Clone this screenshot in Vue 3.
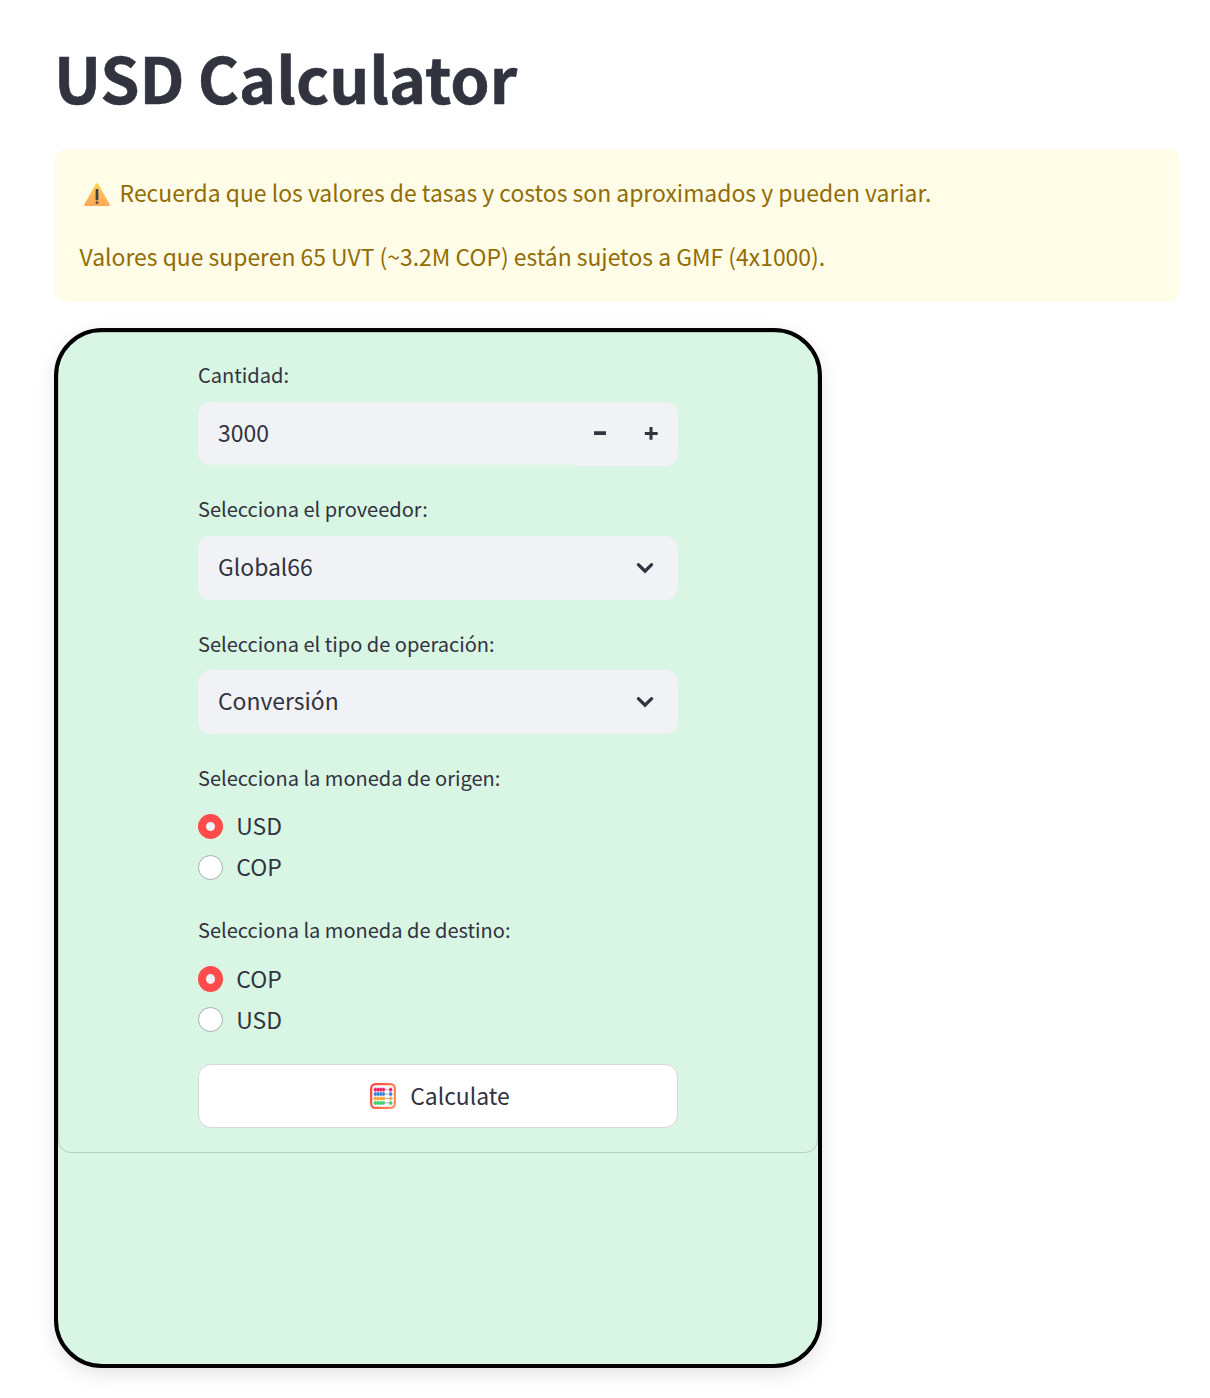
<script setup>
import { ref } from 'vue'

const amount = ref(3000)
const selects = [
  { label: 'Selecciona el proveedor:', value: 'Global66', name: 'provider' },
  { label: 'Selecciona el tipo de operación:', value: 'Conversión', name: 'operation' },
]
const radios = ref([
  { name: 'origen', label: 'Selecciona la moneda de origen:', options: ['USD', 'COP'], value: 'USD' },
  { name: 'destino', label: 'Selecciona la moneda de destino:', options: ['COP', 'USD'], value: 'COP' },
])
const beadRows = [
  { y: 6.9, color: '#ee2a6b' },
  { y: 11.5, color: '#3d86dc' },
  { y: 16.1, color: '#f7ab35' },
  { y: 20.7, color: '#3fcf74' },
]
const beads = [5.6, 8.4, 11.2, 14, 21.4]
</script>

<template>
  <main class="page">
    <h1 class="title">USD Calculator</h1>

    <section class="alert">
      <p class="alert-line">
        <svg class="warn" width="26" height="24" viewBox="0 0 26 24" aria-hidden="true">
          <defs>
            <linearGradient id="warnFill" x1="0" y1="0" x2="0" y2="1">
              <stop offset="0" stop-color="#ffd152" />
              <stop offset="1" stop-color="#ffa758" />
            </linearGradient>
          </defs>
          <path d="M11.9 .8Q13 -.5 14.1 .8L25.7 21.6Q26.2 23 24.8 23H1.2Q-.2 23 .3 21.6Z" fill="url(#warnFill)" />
          <rect x="11.6" y="6" width="2.8" height="11.2" rx=".8" fill="#45424f" />
          <rect x="11.6" y="18.4" width="2.8" height="2.4" rx=".8" fill="#45424f" />
        </svg>
        <span>Recuerda que los valores de tasas y costos son aproximados y pueden variar.</span>
      </p>
      <p class="alert-line">Valores que superen 65 UVT (~3.2M COP) están sujetos a GMF (4x1000).</p>
    </section>

    <section class="card">
      <form class="form" @submit.prevent>
        <div class="group">
          <div class="label">Cantidad:</div>
          <div class="field number">
            <span class="value">{{ amount }}</span>
            <button type="button" class="step" @click="amount--">
              <svg width="14" height="14" viewBox="0 0 14 14"><path d="M1 5.3H13V9H1Z" fill="#31333f" /></svg>
            </button>
            <button type="button" class="step plus" @click="amount++">
              <svg width="14" height="14" viewBox="0 0 14 14"><path d="M5.5 1H8.5V6H13.7V9H8.5V13.8H5.5V9H.8V6H5.5Z" fill="#31333f" /></svg>
            </button>
          </div>
        </div>

        <div v-for="s in selects" :key="s.label" class="group" :class="s.name">
          <div class="label">{{ s.label }}</div>
          <div class="field">
            <span class="value">{{ s.value }}</span>
            <svg class="chevron" width="18" height="12" viewBox="0 0 18 12">
              <path d="M2.4 2.6L9 9.2L15.6 2.6" fill="none" stroke="#31333f" stroke-width="3.2" stroke-linecap="round" stroke-linejoin="miter" />
            </svg>
          </div>
        </div>

        <div v-for="r in radios" :key="r.name" class="radio-group" :class="r.name">
          <div class="label">{{ r.label }}</div>
          <div class="options">
            <div v-for="o in r.options" :key="o" class="option" @click="r.value = o">
              <span class="dot" :class="{ on: r.value === o }"></span>
              <span class="option-text">{{ o }}</span>
            </div>
          </div>
        </div>

        <button type="submit" class="submit">
          <svg width="26" height="26" viewBox="0 0 27 27" aria-hidden="true">
            <defs>
              <linearGradient id="frame" x1="0" y1=".3" x2="1" y2=".7">
                <stop offset="0" stop-color="#f8483f" />
                <stop offset="1" stop-color="#ff8d58" />
              </linearGradient>
            </defs>
            <rect x="1.2" y="1.2" width="24.6" height="24.6" rx="4.4" fill="#fff" stroke="url(#frame)" stroke-width="2.3" />
            <g v-for="row in beadRows" :key="row.y">
              <path :d="`M3 ${row.y}H24`" stroke="#9b8ca8" stroke-width=".8" />
              <ellipse v-for="x in beads" :key="x" :cx="x" :cy="row.y" rx="1.6" ry="2.1" :fill="row.color" />
            </g>
          </svg>
          <span>Calculate</span>
        </button>
      </form>
    </section>
  </main>
</template>

<style>
body {
  margin: 0;
  background: #fff;
}
</style>

<style scoped>
.page {
  box-sizing: border-box;
  width: 1210px;
  height: 1398px;
  padding: 35px 30px 0 54px;
  overflow: hidden;
  color: #31333f;
  font-family: "Noto Sans CJK SC", "Noto Sans", sans-serif;
  font-size: 22.92px;
}
.title {
  margin: 0 0 30px;
  height: 84px;
  font-size: 63px;
  line-height: 84px;
  font-weight: 700;
  letter-spacing: -0.05px;
  word-spacing: -1px;
  -webkit-text-stroke: 0.6px #31333f;
}
.alert {
  box-sizing: border-box;
  height: 153px;
  padding: 24px 25.6px;
  border-radius: 12.8px;
  background: #fffce7;
  color: #926c05;
}
.alert-line {
  display: flex;
  align-items: center;
  height: 38px;
  margin: 0 0 26px;
  line-height: 38px;
  white-space: nowrap;
}
.warn {
  margin: 5px 10px 0 4px;
}
.card {
  box-sizing: border-box;
  width: 768px;
  height: 1040px;
  margin-top: 26px;
  border: 4px solid #000;
  border-radius: 48px;
  background: #d9f5e4;
  box-shadow: 0 6.4px 19.2px rgba(0, 0, 0, 0.1);
  overflow: hidden;
}
.form {
  box-sizing: border-box;
  height: 821px;
  padding: 27px 139px 0;
  border: 1px solid rgba(49, 51, 63, 0.2);
  border-radius: 12.8px;
}
.group {
  margin-bottom: 28px;
}
.label {
  height: 30px;
  line-height: 30px;
  font-size: 20.05px;
}
.operation .label,
.radio-group .label {
  box-sizing: border-box;
  padding-top: 1px;
}
.field {
  position: relative;
  display: flex;
  align-items: center;
  box-sizing: border-box;
  height: 64px;
  margin-top: 12px;
  padding-left: 20px;
  border-radius: 12.8px;
  background: #f0f2f6;
  overflow: hidden;
}
.value {
  flex: 1;
  line-height: 38px;
  margin-top: -4px;
}
.number::after {
  content: "";
  position: absolute;
  left: 8px;
  bottom: 1px;
  width: 368px;
  height: 1px;
  background: #d9f5e4;
}
.step {
  display: flex;
  align-items: center;
  justify-content: center;
  width: 51px;
  height: 64px;
  padding: 0;
  border: 0;
  background: none;
}
.plus {
  margin-right: 2px;
}
.step svg {
  margin-bottom: 2px;
}
.chevron {
  margin-right: 24px;
}
.options {
  display: flex;
  flex-direction: column;
  gap: 16px;
  margin-top: 22px;
}
.destino {
  margin-top: 34px;
}
.option {
  display: flex;
  align-items: center;
  height: 25px;
}
.dot {
  box-sizing: border-box;
  width: 25px;
  height: 25px;
  margin-right: 13.3px;
  border: 1px solid #a2b0ac;
  border-radius: 50%;
  background: #fff;
}
.dot.on {
  border: 8px solid #ff4b4b;
  background: #f0f2f6;
}
.destino .dot.on {
  height: 26px;
}
.option-text {
  line-height: 25px;
  margin-top: -3px;
}
.destino .option-text {
  margin-top: -1px;
}
.submit {
  display: flex;
  align-items: center;
  justify-content: center;
  gap: 14.5px;
  box-sizing: border-box;
  width: 480px;
  height: 64px;
  margin-top: 32px;
  padding: 0 0 0 3.5px;
  border: 1px solid #d6d6d9;
  border-radius: 12.8px;
  background: #fff;
  color: inherit;
  font: inherit;
}
.submit span {
  line-height: 38px;
  margin-top: -2px;
}
</style>
